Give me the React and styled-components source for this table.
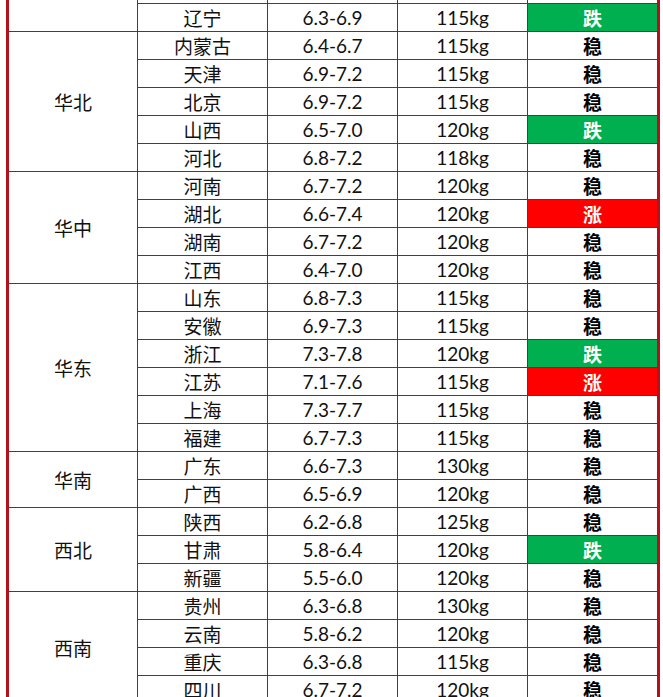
import React from "react";
import styled, { createGlobalStyle } from "styled-components";

const Global = createGlobalStyle`
  html, body { margin: 0; padding: 0; overflow: hidden; background: #fff; }
  body { font-family: Lato, "Noto Sans CJK SC", sans-serif; }
`;

const Page = styled.div`
  width: 663px;
  height: 697px;
  overflow: hidden;
  padding-left: 6px;
  box-sizing: border-box;
`;

const Grid = styled.div`
  display: grid;
  grid-template-columns: 128px repeat(4, 129px);
  grid-auto-rows: 27px;
  gap: 1px;
  width: max-content;
  margin-top: -52px;
  background: #951b26;
  border-left: 3px solid #b3121c;
  border-right: 3px solid #b3121c;
`;

const Cell = styled.div`
  display: flex;
  align-items: center;
  justify-content: center;
  background: #fff;
  color: #111;
  font-size: 18px;
  line-height: 1;
  white-space: nowrap;
`;

const Region = styled(Cell)`
  grid-row: span ${(p) => p.$span};
  font-family: "Noto Sans CJK SC", sans-serif;
  font-size: 19px;
`;

const Province = styled(Cell)`
  font-family: "Noto Sans CJK SC", sans-serif;
  font-size: 19px;
`;

const Num = styled(Cell)`
  font-family: Lato, "Noto Sans CJK SC", sans-serif;
  font-size: 19px;
`;

const trendBg = { 稳: "#ffffff", 跌: "#00b050", 涨: "#ff0000" };

const Trend = styled(Cell)`
  font-family: "Noto Sans CJK SC", sans-serif;
  font-weight: 700;
  font-size: 19px;
  background: ${(p) => trendBg[p.$t]};
  color: ${(p) => (p.$t === "稳" ? "#000" : "#fff")};
`;

const data = [
  ["东北", [
    ["黑龙江", "6.2-6.8", "115kg", "稳"],
    ["吉林", "6.3-6.9", "115kg", "稳"],
    ["辽宁", "6.3-6.9", "115kg", "跌"],
  ]],
  ["华北", [
    ["内蒙古", "6.4-6.7", "115kg", "稳"],
    ["天津", "6.9-7.2", "115kg", "稳"],
    ["北京", "6.9-7.2", "115kg", "稳"],
    ["山西", "6.5-7.0", "120kg", "跌"],
    ["河北", "6.8-7.2", "118kg", "稳"],
  ]],
  ["华中", [
    ["河南", "6.7-7.2", "120kg", "稳"],
    ["湖北", "6.6-7.4", "120kg", "涨"],
    ["湖南", "6.7-7.2", "120kg", "稳"],
    ["江西", "6.4-7.0", "120kg", "稳"],
  ]],
  ["华东", [
    ["山东", "6.8-7.3", "115kg", "稳"],
    ["安徽", "6.9-7.3", "115kg", "稳"],
    ["浙江", "7.3-7.8", "120kg", "跌"],
    ["江苏", "7.1-7.6", "115kg", "涨"],
    ["上海", "7.3-7.7", "115kg", "稳"],
    ["福建", "6.7-7.3", "115kg", "稳"],
  ]],
  ["华南", [
    ["广东", "6.6-7.3", "130kg", "稳"],
    ["广西", "6.5-6.9", "120kg", "稳"],
  ]],
  ["西北", [
    ["陕西", "6.2-6.8", "125kg", "稳"],
    ["甘肃", "5.8-6.4", "120kg", "跌"],
    ["新疆", "5.5-6.0", "120kg", "稳"],
  ]],
  ["西南", [
    ["贵州", "6.3-6.8", "130kg", "稳"],
    ["云南", "5.8-6.2", "120kg", "稳"],
    ["重庆", "6.3-6.8", "115kg", "稳"],
    ["四川", "6.7-7.2", "120kg", "稳"],
  ]],
];

export default function App() {
  return (
    <Page>
      <Global />
      <Grid>
        {data.map(([region, rows]) =>
          rows.map((r, i) => (
            <React.Fragment key={region + r[0]}>
              {i === 0 && <Region $span={rows.length}>{region}</Region>}
              <Province>{r[0]}</Province>
              <Num>{r[1]}</Num>
              <Num>{r[2]}</Num>
              <Trend $t={r[3]}>{r[3]}</Trend>
            </React.Fragment>
          ))
        )}
      </Grid>
    </Page>
  );
}
